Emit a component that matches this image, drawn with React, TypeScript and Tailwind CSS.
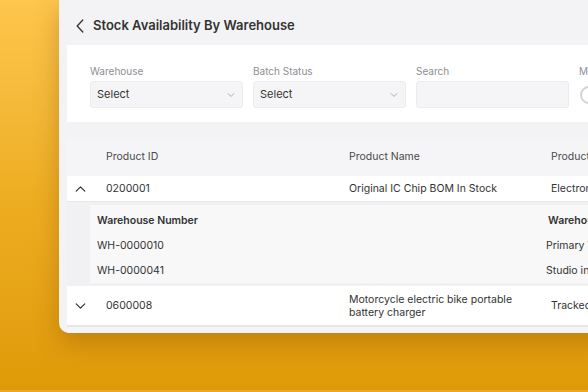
import React from 'react';

const font = { fontFamily: 'Inter, "Noto Sans", sans-serif' };

const Chevron = ({ dir, className }: { dir: 'up' | 'down' | 'left'; className?: string }) => {
  const d = dir === 'up' ? 'M1 6 L6 1 L11 6' : dir === 'down' ? 'M1 1 L6 6 L11 1' : 'M7 1 L1 7.5 L7 14';
  const vb = dir === 'left' ? '0 0 8 15' : '0 0 12 7';
  return (
    <svg viewBox={vb} className={className} fill="none" stroke="currentColor" strokeWidth={1.4} strokeLinecap="round" strokeLinejoin="round">
      <path d={d} />
    </svg>
  );
};

const FilterSelect = ({ label, placeholder, chevron = true }: { label: string; placeholder?: string; chevron?: boolean }) => (
  <div className="flex w-[153px] shrink-0 flex-col">
    <div className="h-[14px] text-[10px] leading-[14px] text-[#8e8e93]">{label}</div>
    <div className="mt-[3px] flex h-[27px] items-center justify-between rounded-[3px] border border-[#ececef] bg-[#f5f5f7] pl-[6px] pr-[7px]">
      <span className="text-[11px] text-[#333]">{placeholder}</span>
      {chevron && <Chevron dir="down" className="h-[4px] w-[8px] text-[#9a9a9f]" />}
    </div>
  </div>
);

export default function App() {
  return (
    <div
      style={font}
      className="relative h-[392px] w-[588px] overflow-hidden bg-gradient-to-b from-[#fdc64c] via-[#eeae22] to-[#df9a06]"
    >
      <div className="absolute inset-x-0 bottom-0 h-[2px] bg-[#eaa928]" />
      <div className="ml-[59px] flex h-[333px] w-[640px] flex-col overflow-hidden rounded-bl-[10px] bg-[#f3f3f5] shadow-[0_10px_26px_rgba(130,70,0,0.35)]">
        {/* header */}
        <div className="flex h-[45px] shrink-0 items-center pl-[17px] pt-[6px]">
          <Chevron dir="left" className="h-[14px] w-[8px] text-[#333]" />
          <span className="ml-[9px] text-[13px] font-semibold text-[#333]">Stock Availability By Warehouse</span>
        </div>

        {/* filters */}
        <div className="ml-[8px] flex h-[77px] shrink-0 gap-[10px] bg-white pl-[23px] pt-[19px]">
          <FilterSelect label="Warehouse" placeholder="Select" />
          <FilterSelect label="Batch Status" placeholder="Select" />
          <FilterSelect label="Search" chevron={false} />
          <div className="flex flex-col">
            <div className="h-[14px] text-[10px] leading-[14px] text-[#8e8e93]">Min</div>
            <div className="mt-[8px] ml-[1px] h-[18px] w-[18px] rounded-full border-[2px] border-[#d4d4d8]" />
          </div>
        </div>

        {/* table */}
        <div className="ml-[8px] mt-[15px] flex flex-1 flex-col rounded-tl-[4px] bg-[#f5f5f7]">
          <div className="flex h-[39px] shrink-0 items-center text-[10.5px] text-[#4a4a4a]">
            <div className="w-[39px]" />
            <div className="w-[243px]">Product ID</div>
            <div className="w-[202px]">Product Name</div>
            <div>Product Category</div>
          </div>

          <div className="flex h-[26px] shrink-0 items-center border-b border-[#e6e6ea] bg-white text-[10.5px] text-[#333]">
            <div className="flex w-[39px] pl-[8px]">
              <Chevron dir="up" className="h-[6px] w-[11px] text-[#333]" />
            </div>
            <div className="w-[243px]">0200001</div>
            <div className="w-[202px]">Original IC Chip BOM In Stock</div>
            <div>Electronics</div>
          </div>

          <div className="flex h-[84px] shrink-0 bg-[#f1f1f3] py-[3px] pl-[23px]">
            <div className="flex flex-1 flex-col bg-[#f8f8f9] pl-[7px] pt-[3px] text-[10.5px] text-[#333]">
              <div className="flex h-[26px] items-center font-semibold">
                <div className="w-[451px]">Warehouse Number</div>
                <div>Warehouse Name</div>
              </div>
              <div className="flex h-[26px] items-center">
                <div className="w-[449px]">WH-0000010</div>
                <div>Primary Warehouse</div>
              </div>
              <div className="flex h-[26px] items-center">
                <div className="w-[449px]">WH-0000041</div>
                <div>Studio inventory</div>
              </div>
            </div>
          </div>

          <div className="flex h-[41px] shrink-0 items-center border-b-[2px] border-[#e6e6ea] bg-white text-[10.5px] text-[#333]">
            <div className="flex w-[39px] pl-[8px]">
              <Chevron dir="down" className="h-[6px] w-[11px] text-[#333]" />
            </div>
            <div className="w-[243px]">0600008</div>
            <div className="w-[202px] leading-[13px]">
              Motorcycle electric bike portable
              <br />
              battery charger
            </div>
            <div>Tracked vehicles</div>
          </div>
        </div>
      </div>
    </div>
  );
}
